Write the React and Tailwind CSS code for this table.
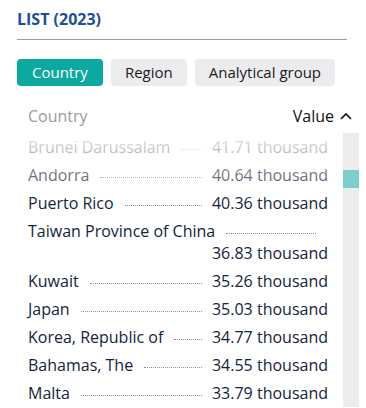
import React from 'react';

const rows = [
  { name: 'Brunei Darussalam', value: '41.71 thousand' },
  { name: 'Andorra', value: '40.64 thousand' },
  { name: 'Puerto Rico', value: '40.36 thousand' },
  { name: 'Taiwan Province of China', value: '36.83 thousand', wrap: true },
  { name: 'Kuwait', value: '35.26 thousand' },
  { name: 'Japan', value: '35.03 thousand' },
  { name: 'Korea, Republic of', value: '34.77 thousand' },
  { name: 'Bahamas, The', value: '34.55 thousand' },
  { name: 'Malta', value: '33.79 thousand' },
];

const Row = ({ name, value, wrap }) => (
  <div className={`flex items-center py-[3px] pl-[11px] pr-[15px] leading-[22px] whitespace-nowrap ${wrap ? 'flex-wrap' : ''}`}>
    <span>{name}</span>
    <span className={`flex-1 h-0 border-b border-dotted border-[#8a8a8a] ml-[11px] translate-y-[2px] ${wrap ? 'mr-[12px]' : 'mr-[10px]'}`} />
    <span className={wrap ? 'w-full text-right' : ''}>{value}</span>
  </div>
);

const App = () => {
  return (
    <div className="w-[366px] h-[408px] overflow-hidden bg-white pl-[17px] pr-[7px] text-[#13243a]" style={{ fontFamily: '"Open Sans", Lato, sans-serif' }}>
      {/* Title */}
      <div className="pt-[8px] pr-[12px]">
        <h2 className="text-[16px] font-bold text-[#1c4f99] leading-[22px]">LIST (2023)</h2>
        <div className="mt-[9px] h-px bg-[#9a9a9a]" />
      </div>

      {/* Tabs */}
      <div className="flex gap-[8px] mt-[19px]">
        <button className="h-[27px] px-[15px] rounded-[4px] bg-[#0ba89f] text-white text-[15px]">Country</button>
        <button className="h-[27px] px-[14px] rounded-[4px] bg-[#ececee] text-[#1a1a1a] text-[15px]">Region</button>
        <button className="h-[27px] px-[14px] rounded-[4px] bg-[#ececee] text-[#1a1a1a] text-[15px]">Analytical group</button>
      </div>

      {/* Header */}
      <div className="flex items-center justify-between mt-[17px] pl-[11px] pr-[7px] h-[26px] text-[16px]">
        <span className="text-[#9b9b9b]">Country</span>
        <span className="flex items-center gap-[6px] text-[#111]">
          Value
          <svg width="12" height="8" viewBox="0 0 12 8" fill="none">
            <path d="M1 7L6 2L11 7" stroke="#111" strokeWidth="1.6" />
          </svg>
        </span>
      </div>

      {/* List */}
      <div className="relative flex mt-[4px] text-[16px]">
        <div className="flex-1">
          {rows.map((r) => (
            <Row key={r.name} {...r} />
          ))}
        </div>
        <div className="w-[16px] bg-[#ececec] relative">
          <div className="absolute left-0 right-0 top-[37px] h-[18px] bg-[#7ccfcb]" />
        </div>
        <div className="absolute left-0 right-[16px] top-0 h-[70px] bg-gradient-to-b from-white/95 to-white/0 pointer-events-none" />
      </div>
    </div>
  );
};

export default App;
